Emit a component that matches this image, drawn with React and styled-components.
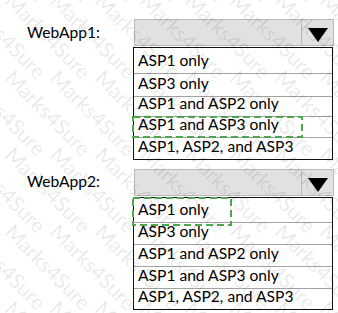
import React from "react";
import styled, { createGlobalStyle } from "styled-components";

const GlobalStyle = createGlobalStyle`
  html, body {
    margin: 0;
    background: #ffffff;
  }
  body {
    font-family: Lato, "Open Sans", sans-serif;
    color: #000000;
  }
`;

// styled-components
const Page = styled.div`
  position: relative;
  width: 338px;
  height: 313px;
  overflow: hidden;
  box-sizing: border-box;
  padding-top: 19px;
  display: flex;
  flex-direction: column;
  gap: 9px;
`;

const Group = styled.div`
  display: grid;
  grid-template-columns: 133px 200px;
`;

const Label = styled.div`
  padding-left: 27px;
  padding-top: ${(p) => p.top}px;
  font-size: 15.6px;
  line-height: 19px;
`;

const Picker = styled.div`
  display: flex;
  flex-direction: column;
  gap: 1px;
`;

const Select = styled.div`
  margin-left: 1px;
  width: 200px;
  height: 27px;
  box-sizing: border-box;
  display: flex;
  background: #e1e1e1;
  border: 1px solid #b9b9b9;
`;

const Field = styled.div`
  flex: 1;
`;

const ArrowCell = styled.div`
  width: 32px;
  border-left: 1px solid #b9b9b9;
  display: flex;
  justify-content: center;
  padding-top: 8px;
  box-sizing: border-box;
`;

const List = styled.ul`
  margin: 0;
  padding: 0;
  width: 200px;
  box-sizing: border-box;
  border: 1px solid #111111;
  list-style: none;
`;

const Option = styled.li`
  position: relative;
  height: ${(p) => p.h}px;
  box-sizing: border-box;
  display: flex;
  align-items: flex-end;
  padding: 0 0 3px 4px;
  font-size: 15.6px;
  line-height: 19px;
  white-space: nowrap;
  border-bottom: ${(p) => (p.last ? "none" : "1px solid #a3a3a3")};
`;

const Pick = styled.svg`
  position: absolute;
  left: -2px;
  top: -1px;
  overflow: visible;
`;

// watermark laid over the page
const Watermark = styled.div`
  position: absolute;
  left: -87px;
  top: -82px;
  display: grid;
  grid-template-columns: repeat(11, 45px);
  grid-auto-rows: 77px;
  pointer-events: none;
`;

const Mark = styled.span`
  display: block;
  width: 0;
  height: 0;
  white-space: nowrap;
  font-family: Lato, sans-serif;
  font-size: 21px;
  line-height: 21px;
  color: rgba(0, 0, 0, 0.09);
  transform: translate(14px, -6px) rotate(45deg);
  transform-origin: left top;
`;

const groups = [
  {
    name: "WebApp1:",
    labelTop: 4,
    heights: [26, 23, 20, 21, 21],
    pick: { row: 3, w: 171, h: 22 },
  },
  {
    name: "WebApp2:",
    labelTop: 3,
    heights: [25, 22, 22, 22, 20],
    pick: { row: 0, w: 100, h: 29 },
  },
];

const options = [
  "ASP1 only",
  "ASP3 only",
  "ASP1 and ASP2 only",
  "ASP1 and ASP3 only",
  "ASP1, ASP2, and ASP3",
];

function DashedBox({ w, h }) {
  return (
    <Pick width={w} height={h}>
      <rect
        x="1"
        y="1"
        width={w - 2}
        height={h - 2}
        fill="none"
        stroke="#4fa84f"
        strokeWidth="2"
        strokeDasharray="7 4"
      />
    </Pick>
  );
}

function Dropdown({ group }) {
  return (
    <Group>
      <Label top={group.labelTop}>{group.name}</Label>
      <Picker>
        <Select>
          <Field />
          <ArrowCell>
            <svg width="20" height="14" viewBox="0 0 20 14">
              <path d="M0 0 H20 L10 14 Z" fill="#000" />
            </svg>
          </ArrowCell>
        </Select>
        <List>
          {options.map((text, i) => (
            <Option key={text} h={group.heights[i]} last={i === options.length - 1}>
              {text}
              {group.pick.row === i && <DashedBox w={group.pick.w} h={group.pick.h} />}
            </Option>
          ))}
        </List>
      </Picker>
    </Group>
  );
}

export default function App() {
  const marks = Array.from({ length: 66 });
  return (
    <>
      <GlobalStyle />
      <Page>
        {groups.map((g) => (
          <Dropdown key={g.name} group={g} />
        ))}
        <Watermark>
          {marks.map((_, i) => (
            <div key={i}>
              <Mark>Marks4Sure</Mark>
            </div>
          ))}
        </Watermark>
      </Page>
    </>
  );
}
